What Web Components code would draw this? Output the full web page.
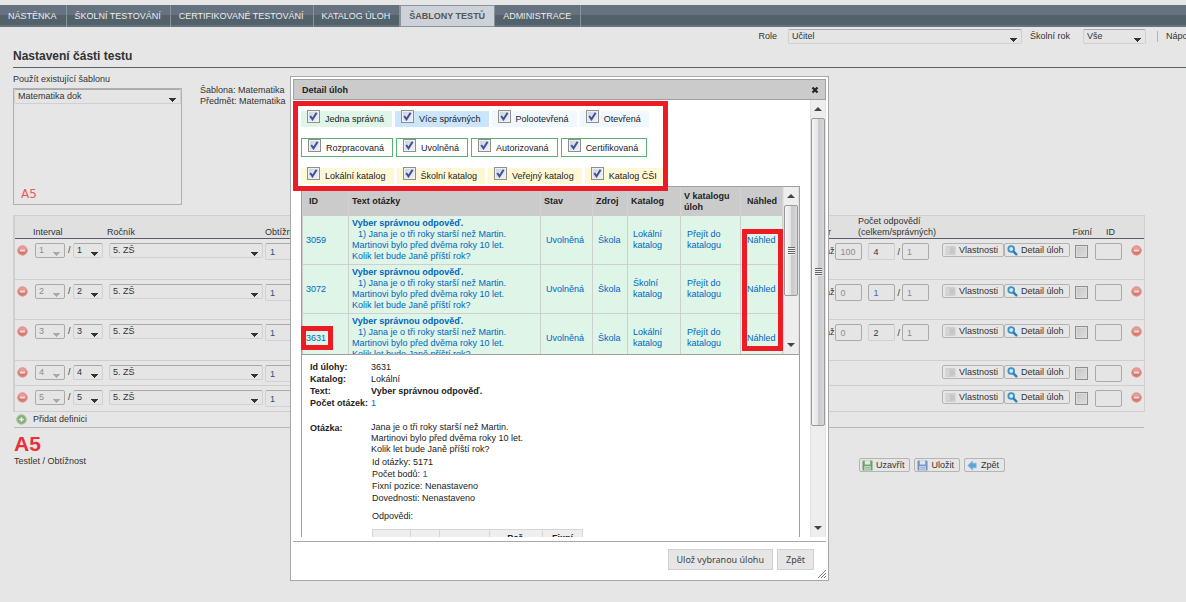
<!DOCTYPE html>
<html lang="cs">
<head>
<meta charset="utf-8">
<title>Nastavení části testu</title>
<style>
  html, body { margin: 0; height: 100%; }
  body {
    background: #e6e6e6; color: #333; overflow: hidden;
    font: 9px/11px "Liberation Sans", Arial, sans-serif;
  }
</style>
</head>
<body>
<app-page></app-page>

<script>
const BASE = `*{box-sizing:border-box}[hidden]{display:none}`;

function define(name, css, html) {
  customElements.define(name, class extends HTMLElement {
    constructor() {
      super();
      this.attachShadow({ mode: "open" });
    }
    connectedCallback() {
      if (this.shadowRoot.childNodes.length) return;
      const t = document.createElement("template");
      t.innerHTML = `<style>${BASE}${css}</style>` + (typeof html === "function" ? html(this) : html);
      this.shadowRoot.append(t.content.cloneNode(true));
    }
  });
}
const attr = (el, n, d = "") => el.getAttribute(n) ?? d;

/* ---------- icons ---------- */
const ICONS = {
  minus: `<circle cx="6" cy="6" r="5.500" fill="#d9776f"/><circle cx="6" cy="6" r="5" fill="none" stroke="#e3a09a" stroke-width=".8"/><path d="M2 5a4 4 0 0 1 8 0z" fill="#e69c95"/><rect x="3" y="5" width="6" height="2" rx=".5" fill="#f1dedc"/>`,
  plus: `<circle cx="6" cy="6" r="5.500" fill="#86b077"/><circle cx="6" cy="6" r="5" fill="none" stroke="#a9c79e" stroke-width=".8"/><path d="M3.500 6h5M6 3.500v5" stroke="#e8f2e4" stroke-width="1.600"/>`,
  list: `<rect x=".5" y="1" width="11" height="10" rx="1" fill="#cfcfcf"/><path d="M1.500 3.500h3M1.500 6h3M1.500 8.500h3" stroke="#dedede"/><rect x="5.500" y="3" width="5" height="6" fill="#c6c6c6"/>`,
  lens: `<circle cx="4.600" cy="4.400" r="3.100" fill="#d9e8f0" stroke="#3a93c6" stroke-width="2"/><path d="M7.200 7.200l3 3" stroke="#2f7fb4" stroke-width="2.600" stroke-linecap="round"/>`,
  diskgreen: `<rect x=".5" y=".5" width="11" height="11" rx="1" fill="#6fa06c"/><rect x="3" y=".5" width="6" height="4.500" fill="#dfe9de"/><rect x="2.500" y="6.500" width="7" height="5" fill="#c9dcc8"/><path d="M3.500 8h5M3.500 10h5" stroke="#8bb488"/>`,
  diskblue: `<rect x=".5" y=".5" width="11" height="11" rx="1" fill="#7793c4"/><rect x="3" y=".5" width="6" height="4.500" fill="#dfe5ee"/><rect x="2.500" y="6.500" width="7" height="5" fill="#cbd6ea"/><path d="M3.500 8h5M3.500 10h5" stroke="#8fa6cf"/>`,
  back: `<path d="M1 6l5-5v2.500h4v5H6V11z" fill="#58a7d6" stroke="#7dbbe0" stroke-width=".8" stroke-linejoin="round"/>`
};
define("ui-icon", `:host{display:block;flex:none;width:11px;height:11px}svg{display:block;width:100%;height:100%}`,
  el => `<svg viewBox="0 0 12 12" aria-hidden="true">${ICONS[attr(el, "name")]}</svg>`);

/* ---------- form controls ---------- */
const arrow = c => `url("data:image/svg+xml,%3Csvg xmlns='http://www.w3.org/2000/svg' width='7' height='4'%3E%3Cpath d='M0 0h7v1H6v1H5v1H4v1H3V3H2V2H1V1H0z' fill='%23${c}'/%3E%3C/svg%3E")`;
define("ui-select", `
  :host{display:block}
  select{appearance:none;display:block;width:100%;height:15px;margin:0;padding:0 16px 0 3px;
    font:inherit;line-height:11px;color:inherit;border:1px solid #cfcfd4;border-top-color:#a9a9a9;border-radius:2px;
    background:#e5e5e5 ${arrow("333")} no-repeat right 4px bottom 1px;opacity:1}
  select:disabled{color:#8c8c8c;border-color:#aaa;background-image:${arrow("aaa")}}`,
  el => `<select aria-label="${attr(el, "label")}" ${el.hasAttribute("off") ? "disabled" : ""}><option>${attr(el, "value")}</option></select>`);

define("ui-input", `
  :host{display:block;flex:none;width:27px}
  input{display:block;width:100%;height:17px;margin:0;padding:0 4px;font:inherit;color:inherit;
    border:1px solid #cfcfd8;border-top-color:#aaa;border-radius:2px;background:#e5e5e5}
  :host([tone=grey]) input{color:#8c8c8c}
  :host([tone=grey]) input,:host([tone=box]) input{border-color:#aaa}
  :host([tone=blue]) input{color:#3f6f9f;border-color:#aaa}
  :host([tone=plain]) input{color:#24527f}`,
  el => `<input type="text" aria-label="${attr(el, "label")}" value="${attr(el, "value")}">`);

const TICK = `url("data:image/svg+xml,%3Csvg xmlns='http://www.w3.org/2000/svg' width='9' height='9'%3E%3Cpath d='M1.200 4l2.300 3.300L7.600.8' fill='none' stroke='%233b52a0' stroke-width='2'/%3E%3C/svg%3E")`;
const CHECK = `
  input{appearance:none;display:block;flex:none;width:13px;height:13px;margin:0;border:1px solid #8e8f8f;
    background:linear-gradient(135deg,#cdd1d8,#f4f4f6);box-shadow:inset 0 0 0 1px #f0f0f0}
  input:checked{background:${TICK} no-repeat center,linear-gradient(135deg,#cdd1d8,#f4f4f6)}`;
define("ui-check", `:host{display:block}${CHECK}input{background:linear-gradient(135deg,#c4c6ca,#dedee0);box-shadow:inset 0 0 0 1px #dcdcdc}`,
  el => `<input type="checkbox" aria-label="${attr(el, "label")}">`);

define("ui-button", `
  :host{display:block;flex:none}
  button{display:flex;align-items:center;gap:3px;height:14px;margin:0;padding:0 5px 0 2px;white-space:nowrap;
    font:inherit;color:inherit;border:1px solid #b4b4b4;border-radius:2px;background:#e6e6e6}`,
  el => `<button type="button"><ui-icon name="${attr(el, "icon")}"></ui-icon><slot></slot></button>`);

define("filter-chip", `
  :host{display:block;background:var(--chip,none)}
  :host([framed]){border:1px solid #58b272}
  label{display:flex;align-items:center;gap:5px;height:16px;padding:0 8px 0 6px;white-space:nowrap}
  :host([framed]) label{height:17px}
  span{padding-top:1px}
  ${CHECK.replace("margin:0;", "margin:0 0 5px;")}`,
  () => `<label><input type="checkbox" checked><span><slot></slot></span></label>`);

/* ---------- navigation ---------- */
define("nav-tab", `
  :host{display:flex;border-right:1px solid #89949d}
  a{display:flex;align-items:center;padding:0 9px 0 8px;color:#eceef0;text-decoration:none;white-space:nowrap}
  :host([active]){border:1px solid #89949d;background:#cdd1d8}
  :host([active]) a{color:#555;font-weight:bold}`,
  () => `<a href="#"><slot></slot></a>`);
define("main-nav", `
  :host{display:block;padding-top:5px}
  nav{display:flex;height:22px;background:linear-gradient(#66727f 10px,#53616b 10px 20px,#66727f 20px)}`,
  () => `<nav><slot></slot></nav>`);

define("user-bar", `
  :host{display:flex;align-items:center;justify-content:flex-end;height:18px}
  .role{width:234px;margin:0 8px 0 11px}
  .year{width:63px;margin:0 11px 0 13px}
  .help{width:29px;height:11px;padding-left:8px;border-left:1px solid #b5b5b5;white-space:nowrap}
  a{color:inherit;text-decoration:none}`,
  `<span>Role</span><ui-select class="role" label="Role" value="Učitel"></ui-select>
   <span>Školní rok</span><ui-select class="year" label="Školní rok" value="Vše"></ui-select>
   <span class="help"><a href="#">Nápověda</a></span>`);

/* ---------- template picker ---------- */
define("template-picker", `
  :host{display:flex;gap:18px;padding:6px 13px 0}
  .box{display:flex;flex-direction:column;justify-content:space-between;width:169px;height:117px;margin-top:3px;border:1px solid #b0b0b0}
  .mark{padding:0 7px 3px;font:12px/14px "DejaVu Sans",Verdana,sans-serif;color:#e65a5f}
  .info{padding-top:11px}`,
  `<div><span>Použít existující šablonu</span>
     <div class="box"><ui-select label="Použít existující šablonu" value="Matematika dok"></ui-select><span class="mark">A5</span></div></div>
   <div class="info">Šablona: Matematika<br>Předmět: Matematika</div>`);

/* ---------- definitions ---------- */
const DEFS = [
  { n: 1, tall: 1, max: 100, total: 4, tone: "" },
  { n: 2, tall: 1, max: 0, total: 1, tone: "blue" },
  { n: 3, tall: 1, max: 0, total: 2, tone: "" },
  { n: 4 },
  { n: 5 }
];
define("definition-table", `
  :host{display:block;margin:10px 41px 0 13px}
  table{width:100%;border-collapse:separate;border-spacing:0;table-layout:fixed;border:1px solid #cfcfcf;border-left-width:2px}
  th{height:23px;padding:0;font-weight:normal;text-align:left;vertical-align:bottom;white-space:nowrap;background:#e0e0e0;border-bottom:1px solid #5b5b6c}
  td{height:25px;padding:4px 0 0;vertical-align:top;border-bottom:1px solid #cfcfcf}
  tr.tall td{height:41px}
  tbody tr:nth-child(2) td{height:40px}
  tr:last-child td{border-bottom:0}
  .c-icon{width:18px}.c-int{width:74px}.c-year{width:158px}.c-count{width:122px}
  .c-btn{width:135px}.c-fix{width:20px}.c-id{width:34px}.c-del{width:15px}
  .f{display:flex;align-items:flex-start}
  .top{gap:27px;padding-left:10px;align-items:flex-end}
  .pair{gap:3px;padding-left:2px}.pair ui-select{width:30px}
  .slash{line-height:14px;width:2px}
  .year{padding:0 2px}.year ui-select{width:154px}
  .head{justify-content:flex-end;padding-right:3px}
  .count{justify-content:flex-end;padding-right:11px}
  .count .a{padding:3px 1px 0 0}
  .count .b{margin:0 2px 0 6px}
  .count .s{margin-right:2px}
  .s{line-height:14px;padding-top:2px}
  .btns{padding-left:2px}
  .id{padding-left:11px}
  ui-icon{margin:2px}
  ui-check{margin-top:2px}
  .obt{width:100px}`,
  () => `<table>
    <colgroup><col class="c-icon"><col class="c-int"><col class="c-year"><col><col class="c-count"><col class="c-btn"><col class="c-fix"><col class="c-id"><col class="c-del"></colgroup>
    <thead><tr><th></th><th>Interval</th><th>Ročník</th><th>Obtížnost</th>
      <th><div class="f top"><span>r</span><span>Počet odpovědí<br>(celkem/správných)</span></div></th>
      <th></th><th><div class="f head">Fixní</div></th><th class="id">ID</th><th></th></tr></thead>
    <tbody>${DEFS.map(d => `<tr class="${d.tall ? "tall" : ""}">
      <td><ui-icon name="minus"></ui-icon></td>
      <td><div class="f pair"><ui-select off label="Interval od" value="${d.n}"></ui-select><span class="slash">/</span><ui-select label="Interval do" value="${d.n}"></ui-select></div></td>
      <td><div class="year"><ui-select label="Ročník" value="5. ZŠ"></ui-select></div></td>
      <td><ui-input class="obt" label="Obtížnost" value="1" tone="plain"></ui-input></td>
      <td>${d.tall ? `<div class="f count"><span class="a">až</span><ui-input tone="grey" label="Bodů až" value="${d.max}"></ui-input><ui-input class="b" tone="${d.tone}" label="Počet odpovědí celkem" value="${d.total}"></ui-input><span class="s">/</span><ui-input tone="grey" label="Počet správných" value="1"></ui-input></div>` : ""}</td>
      <td><div class="f btns"><ui-button icon="list">Vlastnosti</ui-button><ui-button icon="lens">Detail úloh</ui-button></div></td>
      <td><ui-check label="Fixní"></ui-check></td>
      <td><ui-input tone="box" label="ID"></ui-input></td>
      <td><ui-icon name="minus"></ui-icon></td></tr>`).join("")}</tbody></table>`);

define("page-foot", `
  :host{display:block;margin:0 42px 0 14px}
  .add{display:flex;align-items:center;gap:6px;height:16px;padding-left:2px;border-bottom:1px solid #b8b8b8}
  a{color:inherit;text-decoration:none}
  .row{display:flex;justify-content:space-between;align-items:flex-start}
  h2{margin:5px 0 1px;font-size:21px;line-height:22px;color:#e8303a}
  .btns{display:flex;gap:4px;margin:30px 139px 0 0}`,
  `<div class="add"><ui-icon name="plus"></ui-icon><a href="#">Přidat definici</a></div>
   <div class="row"><div><h2>A5</h2>Testlet / Obtížnost</div>
     <div class="btns"><ui-button icon="diskgreen">Uzavřít</ui-button><ui-button icon="diskblue">Uložit</ui-button><ui-button icon="back">Zpět</ui-button></div></div>`);

/* ---------- dialog ---------- */
define("scroll-rail", `
  :host{display:flex;flex-direction:column;flex:none;width:16px;background:#eee;border:1px solid #e2e2e2;border-width:0 1px}
  svg{display:block;flex:none;width:14px;height:18px}
  .thumb{display:flex;align-items:center;justify-content:center;flex:none;height:var(--thumb);border:1px solid #9a9a9a;border-radius:2px;
    background:linear-gradient(90deg,#f6f6f6,#e6e6e8 45%,#c9c9cd 55%,#d8d8dc)}
  .grip{width:7px;height:8px;background:repeating-linear-gradient(#666 0 1px,#eee 1px 2px)}
  .rest{flex:1}`,
  `<svg viewBox="0 0 14 18"><path d="M7 7l4 4H3z" fill="#444"/></svg><div class="thumb"><div class="grip"></div></div><div class="rest"></div>
   <svg viewBox="0 0 14 18"><path d="M7 11l4-4H3z" fill="#444"/></svg>`);

define("red-mark", `:host{display:block;position:absolute;border:5px solid #ed1c24;pointer-events:none}`, ``);

const TASKS = [["3059", "Lokální"], ["3072", "Školní"], ["3631", "Lokální"]];
define("task-table", `
  :host{display:flex;height:169px;overflow:hidden;border:solid #a0a0a0;border-width:1px 0}
  .view{flex:1;overflow:hidden;padding-left:1px;background:#ccc}
  table{width:100%;table-layout:fixed;border-collapse:separate;border-spacing:0}
  th{height:29px;padding:0 4px 0 3px;text-align:left;color:#222;background:#cbcbcb;border-right:1px solid #d2d2d2}
  td{height:49px;padding:0 0 0 5px;background:#def5e8;border:solid #cfcfcf;border-width:0 1px 1px 0}
  th:first-child{padding-left:6px}td:first-child{padding-left:3px}
  td:nth-child(2){padding-left:3px}
  td:nth-child(6){padding-left:6px}
  td:nth-child(7){padding-left:6px}th:nth-child(7){padding-left:6px}
  a{color:#0066bf;text-decoration:none}
  .ind{padding-left:6px}
  .w-id{width:46px}.w-stav{width:52px}.w-zdroj{width:35px}.w-kat{width:53px}.w-jump{width:60px}.w-look{width:42px}`,
  () => `<div class="view"><table><colgroup><col class="w-id"><col><col class="w-stav"><col class="w-zdroj"><col class="w-kat"><col class="w-jump"><col class="w-look"></colgroup>
    <thead><tr><th>ID</th><th>Text otázky</th><th>Stav</th><th>Zdroj</th><th>Katalog</th><th>V katalogu úloh</th><th>Náhled</th></tr></thead>
    <tbody>${TASKS.map(([id, k]) => `<tr><td><a href="#">${id}</a></td>
      <td><a href="#"><b>Vyber správnou odpověď.</b><br><span class="ind">1) Jana je o tři roky starší než Martin.</span><br>Martinovi bylo před dvěma roky 10 let.<br>Kolik let bude Janě příští rok?</a></td>
      <td><a href="#">Uvolněná</a></td><td><a href="#">Škola</a></td><td><a href="#">${k}<br>katalog</a></td>
      <td><a href="#">Přejít do<br>katalogu</a></td><td><a href="#">Náhled</a></td></tr>`).join("")}</tbody></table></div>
    <scroll-rail style="--thumb:91px"></scroll-rail>`);

define("task-detail", `
  :host{display:block;padding:6px 8px 0;color:#222}
  dl{display:grid;grid-template-columns:61px 1fr;margin:0;line-height:12px}
  dt{font-weight:bold;white-space:nowrap}dd{margin:0}
  .q{margin-top:13px}
  .text{line-height:11px}
  ul{list-style:none;margin:1px 0 0;padding:0 0 0 1px}
  p{margin:6px 0 7px 1px}
  i{font-style:normal;color:#0066bf}
  table{width:211px;margin-left:1px;border-collapse:collapse;table-layout:fixed;background:#eee}
  th{border:1px solid #d6d6d6;height:16px;padding:0}
  .a{width:38px}.b{width:29px}.c{width:50px}.d{width:53px}`,
  `<dl><dt>Id úlohy:</dt><dd>3631</dd><dt>Katalog:</dt><dd>Lokální</dd><dt>Text:</dt><dd><b>Vyber správnou odpověď.</b></dd><dt>Počet otázek:</dt><dd><i>1</i></dd></dl>
   <dl class="q"><dt>Otázka:</dt><dd><div class="text">Jana je o tři roky starší než Martin.<br>Martinovi bylo před dvěma roky 10 let.<br>Kolik let bude Janě příští rok?</div>
   <ul><li>Id otázky: 5171</li><li>Počet bodů: <i>1</i></li><li>Fixní pozice: Nenastaveno</li><li>Dovednosti: Nenastaveno</li></ul>
   <p>Odpovědi:</p>
   <table><tr><th class="a"></th><th class="b"></th><th class="c"></th><th class="d">Poř.</th><th>Fixní</th></tr></table></dd></dl>`);

define("task-dialog", `
  :host{display:flex;flex-direction:column;position:absolute;left:290px;top:76px;width:539px;padding:2px;background:#fff;border:1px solid #a8a8a8}
  header{display:flex;align-items:center;justify-content:space-between;height:21px;padding:1px 6px 0 8px;background:#cbcbcb;border:1px solid #a0a0a0;color:#222}
  h1{margin:0;font-size:9px}
  .x{width:8px;height:8px;padding:0;border:0;background:none}
  .x svg{display:block}
  .body{display:flex;justify-content:space-between;position:relative;height:437px}
  .scroll{width:499px;margin-left:8px;overflow:hidden;display:flex;flex-direction:column}
  .filters{display:flex;flex-direction:column;gap:11px;padding:11px 0 2px;color:#222}
  .line{display:flex;gap:3px}
  .g{--chip:#def5e8}.b{--chip:#cce5ff}.l{--chip:#f0f7ff}.y{--chip:#fff8d6}
  .pane{flex:1;border:solid #a0a0a0;border-width:0 1px}
  footer{display:flex;justify-content:flex-end;gap:4px;position:relative;margin-top:4px;padding:7px 12px 8px;border-top:1px solid #a8a8a8}
  footer button{height:21px;margin:0;padding:0 8px;font:9px/12px "Noto Sans","Open Sans",sans-serif;color:#444;background:#e6e6e6;border:1px solid #d0d0d0}
  .grip{position:absolute;right:0;bottom:0;width:8px;height:8px}
  .m1{left:0;top:1px;width:375px;height:90px}
  .m2{left:449px;top:129px;width:41px;height:122px}
  .m3{left:8px;top:226px;width:32px;height:24px}`,
  `<header><h1>Detail úloh</h1><button class="x" type="button" aria-label="Zavřít"><svg viewBox="0 0 8 8" width="8" height="8"><path d="M1.500 1.500l5 5M6.500 1.500l-5 5" stroke="#222" stroke-width="2.200"/></svg></button></header>
   <div class="body"><div class="scroll">
     <div class="filters">
       <div class="line"><filter-chip class="g">Jedna správná</filter-chip><filter-chip class="b">Více správných</filter-chip><filter-chip class="l">Polootevřená</filter-chip><filter-chip class="l">Otevřená</filter-chip></div>
       <div class="line"><filter-chip framed>Rozpracovaná</filter-chip><filter-chip framed>Uvolněná</filter-chip><filter-chip framed>Autorizovaná</filter-chip><filter-chip framed>Certifikovaná</filter-chip></div>
       <div class="line"><filter-chip class="y">Lokální katalog</filter-chip><filter-chip class="y">Školní katalog</filter-chip><filter-chip class="y">Veřejný katalog</filter-chip><filter-chip class="y">Katalog ČŠI</filter-chip></div>
     </div>
     <div class="pane"><task-table></task-table><task-detail></task-detail></div></div>
     <scroll-rail style="--thumb:308px"></scroll-rail>
     <red-mark class="m1"></red-mark><red-mark class="m2"></red-mark><red-mark class="m3"></red-mark>
   </div>
   <footer><button type="button">Ulož vybranou úlohu</button><button type="button">Zpět</button>
     <svg class="grip" viewBox="0 0 8 8"><path d="M0 8L8 0M3 8l5-5M6 8l2-2" stroke="#777" stroke-width="1"/></svg></footer>`);

/* ---------- page ---------- */
define("app-page", `
  :host{display:block;min-height:100%}
  h1{margin:4px 0 0 13px;padding-bottom:3px;font-size:12px;line-height:15px;border-bottom:1px solid #53616b}`,
  `<main-nav><nav-tab>NÁSTĚNKA</nav-tab><nav-tab>ŠKOLNÍ TESTOVÁNÍ</nav-tab><nav-tab>CERTIFIKOVANÉ TESTOVÁNÍ</nav-tab><nav-tab>KATALOG ÚLOH</nav-tab><nav-tab active>ŠABLONY TESTŮ</nav-tab><nav-tab>ADMINISTRACE</nav-tab></main-nav>
   <user-bar></user-bar>
   <h1>Nastavení části testu</h1>
   <template-picker></template-picker>
   <definition-table></definition-table>
   <page-foot></page-foot>
   <task-dialog></task-dialog>`);
</script>
</body>
</html>
